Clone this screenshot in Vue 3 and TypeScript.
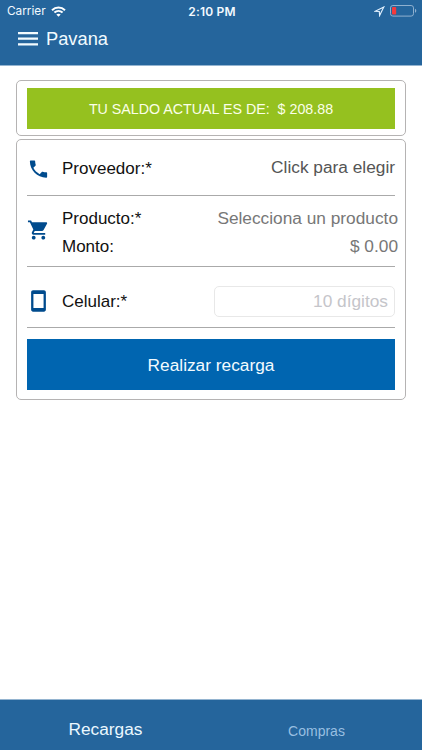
<script setup lang="ts">
import { ref } from 'vue'

const title = 'Pavana'
const balance = '208.88'
const phone = ref('')
const tabs = ['Recargas', 'Compras']
const active = ref('Recargas')
</script>

<template>
  <div class="screen">
    <header class="top">
      <div class="status">
        <div class="carrier">
          <span>Carrier</span>
          <svg width="15" height="11" viewBox="0 0 15 11" fill="none" stroke="#fff" stroke-width="2">
            <path d="M1 4.2C4.7.7 10.3.7 14 4.2" />
            <path d="M3.4 6.6c2.4-2.2 5.8-2.2 8.2 0" />
            <path d="M7.5 10.7 5.3 8.5c1.2-1.1 3.2-1.1 4.4 0z" fill="#fff" stroke="none" />
          </svg>
        </div>
        <span class="time">2:10 PM</span>
        <div class="power">
          <svg width="11" height="11" viewBox="0 0 11 11" fill="none" stroke="#e4f2ff" stroke-width="1.1">
            <path d="M9.8 1 1.2 5.3 5.3 5.5 5.6 9.6z" />
          </svg>
          <svg width="27" height="12" viewBox="0 0 27 12">
            <rect x=".5" y=".5" width="23" height="10.6" rx="2.4" fill="none" stroke="#8fb0cf" />
            <rect x="2" y="2" width="4.2" height="7.6" rx=".8" fill="#f5393b" />
            <path d="M25 3.8c1.8.7 1.8 3.3 0 4z" fill="#8fb0cf" />
          </svg>
        </div>
      </div>
      <div class="bar">
        <svg width="20" height="14" viewBox="0 0 20 14" fill="#f2fbff">
          <path d="M0 0h20v2.2H0zM0 5.6h20v2.2H0zM0 11.2h20v2.2H0z" />
        </svg>
        <h1>{{ title }}</h1>
      </div>
    </header>

    <main>
      <section class="card balance-card">
        <div class="balance">TU SALDO ACTUAL ES DE:&nbsp; $ {{ balance }}</div>
      </section>

      <section class="card form">
        <div class="row provider">
          <svg class="icon" width="24" height="24" viewBox="0 0 24 24">
            <path d="M6.62 10.79c1.44 2.83 3.76 5.14 6.59 6.59l2.2-2.2c.27-.27.67-.36 1.02-.24 1.12.37 2.33.57 3.57.57.55 0 1 .45 1 1V20c0 .55-.45 1-1 1-9.39 0-17-7.61-17-17 0-.55.45-1 1-1h3.5c.55 0 1 .45 1 1 0 1.25.2 2.45.57 3.57.11.35.03.74-.25 1.02z" />
          </svg>
          <span class="label">Proveedor:*</span>
          <span class="pick">Click para elegir</span>
        </div>
        <div class="row product">
          <svg class="icon cart" width="24" height="24" viewBox="0 0 24 24">
            <path d="M7 18c-1.1 0-1.99.9-1.99 2S5.9 22 7 22s2-.9 2-2-.9-2-2-2zM1 2v2h2l3.6 7.59-1.35 2.45c-.16.28-.25.61-.25.96 0 1.1.9 2 2 2h12v-2H7.42c-.14 0-.25-.11-.25-.25l.03-.12.9-1.63h7.45c.75 0 1.41-.41 1.75-1.03l3.58-6.49c.08-.14.12-.31.12-.48 0-.55-.45-1-1-1H5.21l-.94-2H1zm16 16c-1.1 0-1.99.9-1.99 2s.89 2 1.99 2 2-.9 2-2-.9-2-2-2z" />
          </svg>
          <div class="lines">
            <div class="line"><span class="label">Producto:*</span><span class="value">Selecciona un producto</span></div>
            <div class="line"><span class="label">Monto:</span><span class="value amount">$ 0.00</span></div>
          </div>
        </div>
        <div class="row phone">
          <svg class="icon mobile" width="24" height="24" viewBox="0 0 24 24">
            <path fill-rule="evenodd" d="M17.7.8H6.3c-1.1 0-2 .9-2 2v18.4c0 1.1.9 2 2 2h11.4c1.1 0 2-.9 2-2V2.800c0-1.100-.9-2-2-2zm-.4 18.400H6.700V4.800h10.600v14.400z" />
          </svg>
          <span class="label">Celular:*</span>
          <input v-model="phone" type="tel" placeholder="10 dígitos" />
        </div>
        <button class="submit" type="button">Realizar recarga</button>
      </section>
    </main>

    <nav>
      <button v-for="tab in tabs" :key="tab" type="button" :class="{ active: active === tab }" @click="active = tab">
        {{ tab }}
      </button>
    </nav>
  </div>
</template>

<style>
body {
  margin: 0;
  background: #fff;
}
</style>

<style scoped>
* {
  box-sizing: border-box;
}
.screen {
  height: 750px;
  display: flex;
  flex-direction: column;
  overflow: hidden;
  font-family: 'Liberation Sans', Arial, sans-serif;
  background: #fff;
}
svg {
  display: block;
  flex: none;
}
button {
  border: 0;
  padding: 0;
  font-family: inherit;
  cursor: pointer;
}
.top {
  height: 66px;
  background: #25659c;
  border-bottom: 1px solid #94b4d0;
}
.status {
  height: 22px;
  display: grid;
  grid-template-columns: 1fr auto 1fr;
  align-items: center;
  padding: 0 5px 0 7px;
  font-family: Inter, sans-serif;
  color: #f2f9ff;
}
.carrier {
  display: flex;
  align-items: center;
  gap: 5px;
  font-size: 11.8px;
}
.time {
  font-size: 12px;
  font-weight: 600;
  letter-spacing: 0.2px;
}
.power {
  display: flex;
  justify-content: flex-end;
  align-items: center;
  gap: 5px;
}
.bar {
  display: flex;
  align-items: center;
  gap: 8px;
  height: 33px;
  padding-left: 18px;
}
h1 {
  margin: 0;
  font-size: 18.3px;
  font-weight: 400;
  color: #f2fbff;
}
main {
  flex: 1;
  display: flex;
  flex-direction: column;
  gap: 3px;
  padding: 14px 16px 0;
}
.card {
  border: 1px solid #b5b3b3;
  border-radius: 5px;
  padding: 7px 10px 0;
}
.balance-card {
  height: 56px;
}
.balance {
  height: 41px;
  display: flex;
  align-items: center;
  justify-content: center;
  background: #95c11f;
  color: #fbffe8;
  font-size: 14.25px;
}
.form {
  height: 261px;
  padding-top: 0;
}
.row {
  display: flex;
  align-items: center;
  border-bottom: 1px solid #aaa;
  font-size: 17px;
}
.icon {
  width: 23px;
  height: 24px;
  fill: #004b8d;
  margin-right: 12px;
}
.cart {
  margin-top: -3px;
}
.mobile {
  margin-top: -2px;
}
.label {
  color: #111;
}
.provider {
  height: 56px;
  padding-top: 2px;
}
.provider .label {
  padding-top: 1px;
}
.pick {
  margin: -3px 0 0 auto;
  font-size: 17.3px;
  color: #555;
}
.product {
  height: 71px;
}
.lines {
  flex: 1;
  margin: 2px -3px 0 0;
}
.line {
  display: flex;
  justify-content: space-between;
  align-items: baseline;
  height: 28px;
  line-height: 28px;
}
.value {
  font-size: 17.3px;
  color: #777;
}
.phone {
  height: 61px;
  padding-top: 9px;
}
input {
  width: 181px;
  height: 31px;
  margin: 0 0 0 auto;
  padding: 0 6px;
  border: 1px solid #e8e8e8;
  border-radius: 5px;
  background: #fff;
  text-align: right;
  font: 17.3px 'Liberation Sans', Arial, sans-serif;
  color: #333;
  outline: none;
}
input::placeholder {
  color: #c5c5ca;
  opacity: 1;
}
.submit {
  display: block;
  width: 100%;
  height: 51px;
  margin-top: 11px;
  padding-top: 1px;
  background: #0065b0;
  color: #f2fbff;
  font-size: 17.3px;
}
nav {
  height: 51px;
  display: grid;
  grid-template-columns: 1fr 1fr;
  background: #25659c;
  border-top: 1px solid #94b4d0;
}
nav button {
  background: transparent;
  padding-top: 11px;
  font-size: 14px;
  color: #98bfe1;
}
nav button.active {
  padding-top: 8px;
  font-size: 17.3px;
  color: #ebf8ff;
}
</style>
